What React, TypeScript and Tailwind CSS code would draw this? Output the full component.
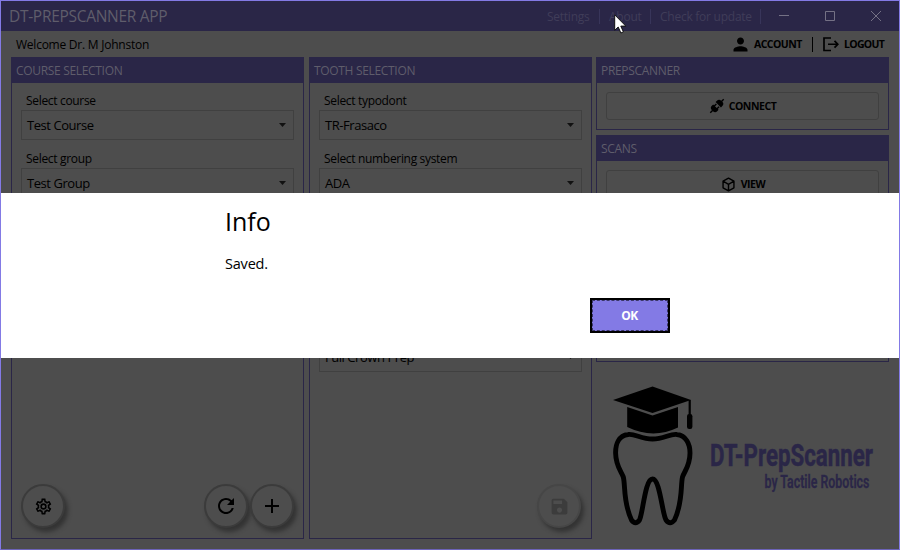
import React from "react";
import { MdPerson, MdRefresh, MdAdd, MdSave } from "react-icons/md";

function Select({ label, value }: { label?: string; value: string }) {
  return (
    <div className="h-[58px]">
      <div className="flex h-[18px] items-center pl-[5px] text-[12px] tracking-[-0.32px] whitespace-nowrap">{label}</div>
      <div className="flex h-[30px] items-center justify-between border border-[#404040] pr-[7px] pl-[5px] text-[13px] whitespace-nowrap">
        <span className="pt-[2px] tracking-[-0.45px]">{value}</span>
        <svg className="h-1 w-[7px]" viewBox="0 0 7 4">
          <path d="M0 0h7L3.500 4Z" fill="#111" />
        </svg>
      </div>
    </div>
  );
}

function Panel({ title, className, children }: { title: string; className: string; children?: React.ReactNode }) {
  return (
    <section className={`flex flex-col border border-[#2a2647] ${className}`}>
      <h2 className="-mx-px -mt-px flex h-[26px] shrink-0 items-center bg-[#2a2647] pt-[2px] pl-[5px] text-[12px] tracking-[-0.32px] text-[#5f5d6b] whitespace-nowrap">
        {title}
      </h2>
      {children}
    </section>
  );
}

function RoundButton({ children, disabled }: { children: React.ReactNode; disabled?: boolean }) {
  return (
    <button
      className={`flex size-11 items-center justify-center rounded-full border-2 bg-[#4d4d4d] shadow-[3px_4px_4px_#333333] ${
        disabled ? "border-[#464646] text-[#3c3c3c]" : "border-[#3b3b3b] text-black"
      }`}
    >
      {children}
    </button>
  );
}

function WideButton({ icon, label }: { icon: React.ReactNode; label: string }) {
  return (
    <button className="mx-[9px] mt-[9px] flex h-7 shrink-0 items-center justify-center gap-[5px] rounded-[3px] border border-[#404040] pl-px text-[10.5px] font-bold tracking-[-0.45px]">
      {icon}
      <span className="pt-[2px]">{label}</span>
    </button>
  );
}

function Plug() {
  return (
    <svg viewBox="0 0 14 14" className="size-[14px] overflow-visible">
      <g transform="rotate(-45 7 7)">
        <path d="M-2.500 7H1M13 7h3.500M4 5.100h4M4 8.900h4" fill="none" stroke="#000" strokeWidth="1.400" />
        <path d="M5.400 3.200v7.600H3.500A3 3 0 0 1 .500 7.800V6.200A3 3 0 0 1 3.500 3.200ZM8.800 3.200v7.600h1.900A3 3 0 0 0 13.700 7.800V6.200A3 3 0 0 0 10.700 3.200Z" />
      </g>
    </svg>
  );
}

function Cog() {
  return (
    <svg viewBox="0 0 24 24" className="size-[19px]" fill="currentColor">
      <path d="M12 8a4 4 0 0 1 4 4 4 4 0 0 1-4 4 4 4 0 0 1-4-4 4 4 0 0 1 4-4m0 2a2 2 0 0 0-2 2 2 2 0 0 0 2 2 2 2 0 0 0 2-2 2 2 0 0 0-2-2m-2 12c-.25 0-.46-.18-.5-.42l-.37-2.65c-.63-.25-1.17-.59-1.69-.99l-2.49 1.01c-.22.08-.49 0-.61-.22l-2-3.46a.493.493 0 0 1 .12-.64l2.11-1.66L4.500 12l.07-1-2.11-1.63a.493.493 0 0 1-.12-.64l2-3.46c.12-.22.39-.31.61-.22l2.49 1c.52-.39 1.06-.73 1.69-.98l.37-2.65c.04-.24.25-.42.5-.42h4c.25 0 .46.18.5.42l.37 2.65c.63.25 1.17.59 1.69.98l2.49-1c.22-.09.49 0 .61.22l2 3.46c.13.22.07.49-.12.64L19.43 11l.07 1-.07 1 2.11 1.63c.19.15.25.42.12.64l-2 3.46c-.12.22-.39.31-.61.22l-2.49-1c-.52.39-1.06.73-1.69.98l-.37 2.65c-.04.24-.25.42-.5.42zm1.25-18-.37 2.61c-1.2.25-2.26.89-3.03 1.78L5.44 7.35l-.75 1.3L6.8 10.2a5.55 5.55 0 0 0 0 3.6l-2.12 1.56.75 1.3 2.43-1.04c.77.88 1.82 1.52 3.01 1.76l.37 2.62h1.52l.37-2.61c1.19-.25 2.24-.89 3.01-1.77l2.43 1.04.75-1.3-2.12-1.55c.4-1.17.4-2.44 0-3.61l2.11-1.55-.75-1.3-2.41 1.04a5.42 5.42 0 0 0-3.03-1.77L12.75 4z" />
    </svg>
  );
}

function Logo() {
  return (
    <svg className="mt-[18px] ml-[10px] h-[160px] w-[285px] shrink-0" viewBox="606 380 285 160">
      <path d="M613 400 652.5 386.5 691 400 652.5 413Z" />
      <path d="M627.2 407 652.5 415.6 678 407V427.5Q653 439.5 627.2 427Z" />
      <path d="M689.7 400V418" fill="none" stroke="#000" strokeWidth="2.2" />
      <rect x="687" y="414" width="5.4" height="15" rx="2.2" />
      <path
        d="M652.5 439C641 439 635 433.5 628 434.5C619 435.5 615.5 444 615.6 453C615.8 466 621 471 623.3 477C625.5 485 623 502 631.5 520Q635.5 525.500 639.500 520C643 513 645 479 652.500 479C660 479 662 513 666 520Q670 525.500 674.500 520C683 502 680.500 485 682.500 477C684.500 471 690 466 690 453C690 444 686 435.500 677 434.500C670 433.500 664 439 652.500 439Z"
        fill="none"
        stroke="#000"
        strokeWidth="4.900"
      />
      <g fill="#2a2647" stroke="#2a2647" fontFamily="Roboto, sans-serif">
        <text transform="translate(710 465.500) scale(.7 1)" fontSize="32" fontWeight="700" strokeWidth=".5" textLength="232.800" lengthAdjust="spacingAndGlyphs">DT-PrepScanner</text>
        <text transform="translate(764.500 488) scale(.66 1)" fontSize="18" fontWeight="600" strokeWidth=".3" textLength="159" lengthAdjust="spacingAndGlyphs">by Tactile Robotics</text>
      </g>
    </svg>
  );
}

export default function App() {
  return (
    <div className="relative flex h-[550px] w-[900px] flex-col overflow-hidden border border-[#837ae5] border-b-[#6c63b8] bg-[#4d4d4d] font-['Open_Sans','Noto_Sans',sans-serif] text-black">
      <header className="flex h-[30px] shrink-0 items-center bg-[#2a2647] pl-2 text-[#5f5d6b]">
        <h1 className="flex-1 pt-[2px] text-[15.5px] tracking-[-0.3px] whitespace-nowrap">DT-PREPSCANNER APP</h1>
        <nav className="flex items-center text-[12px] tracking-[-0.25px] text-[#403d59] whitespace-nowrap">
          <span className="w-[52px] pt-[2px]">Settings</span>
          <span className="flex h-[15px] w-[51px] items-center border-l border-[#38355a] pt-[2px] pl-[9px]">About</span>
          <span className="flex h-[15px] w-[111px] items-center border-x border-[#38355a] pt-[2px] pl-[9px]">Check for update</span>
        </nav>
        <svg className="h-[30px] w-[138px]" viewBox="761 1 138 30" fill="none" stroke="#747185">
          <path d="M779 15.500h10M825.500 11.500h9v9h-9zM871 11l10 10M881 11l-10 10" />
        </svg>
      </header>
      <div className="flex h-[26px] shrink-0 items-center pr-[15px] pl-[15px] text-[12px] whitespace-nowrap">
        <span className="flex-1 pt-[2px] tracking-[-0.24px]">Welcome Dr. M Johnston</span>
        <MdPerson className="mr-[3px] size-[21px]" />
        <span className="w-12 pt-[2px] text-[10.5px] font-bold tracking-[-0.55px]">ACCOUNT</span>
        <i className="mr-[10px] ml-[10px] h-[15px] w-px bg-black" />
        <svg className="mr-[5px] h-[15px] w-4" viewBox="0 0 16 15" fill="none" stroke="#000" strokeWidth="1.700">
          <path d="M8 1H1v12.500h7M5 7.250h9.500M11.500 3.800l3.300 3.450-3.300 3.450" />
        </svg>
        <span className="w-10 pt-[2px] text-[10.5px] font-bold tracking-[-0.7px]">LOGOUT</span>
      </div>
      <main className="flex h-[482px] shrink-0 pl-[10px]">
        <Panel title="COURSE SELECTION" className="w-[293px]">
          <div className="px-[9px] pt-[9px]">
            <Select label="Select course" value="Test Course" />
            <Select label="Select group" value="Test Group" />
          </div>
          <div className="mt-auto flex gap-[1.5px] pb-[10px] pl-[9px]">
            <RoundButton><Cog /></RoundButton>
            <span className="w-[136px]" />
            <RoundButton><MdRefresh className="size-6" /></RoundButton>
            <RoundButton><MdAdd className="size-6" /></RoundButton>
          </div>
        </Panel>
        <Panel title="TOOTH SELECTION" className="ml-[5px] w-[283px]">
          <div className="px-[9px] pt-[9px]">
            <Select label="Select typodont" value="TR-Frasaco" />
            <Select label="Select numbering system" value="ADA" />
            <div className="mt-[116px]"><Select value="Full Crown Prep" /></div>
          </div>
          <div className="mt-auto flex justify-end pr-[10px] pb-[10px]">
            <RoundButton disabled><MdSave className="size-[21px]" /></RoundButton>
          </div>
        </Panel>
        <div className="ml-1 flex w-[293px] flex-col">
          <Panel title="PREPSCANNER" className="h-[73px] shrink-0">
            <WideButton icon={<Plug />} label="CONNECT" />
          </Panel>
          <Panel title="SCANS" className="mt-[5px] h-[227px] shrink-0">
            <WideButton
              label="VIEW"
              icon={
                <svg viewBox="0 0 16 16" className="size-[15px]" fill="none" stroke="#000" strokeWidth="1.500" strokeLinejoin="round">
                  <path d="M8 1.200 13.800 4.500v7L8 14.800 2.200 11.500v-7ZM2.200 4.500 8 7.800l5.800-3.300M8 7.800v6.700" />
                </svg>
              }
            />
          </Panel>
          <Logo />
        </div>
      </main>

      <div role="dialog" className="absolute top-[192px] left-0 h-[165px] w-[898px] bg-white pl-[224px]">
        <h2 className="mt-[12px] h-8 text-[25px] leading-8">Info</h2>
        <p className="mt-[17px] h-5 text-[14.5px] leading-5 tracking-[-0.2px]">Saved.</p>
        <button className="mt-[24px] ml-[365px] flex h-[35px] w-20 border-2 border-black bg-[#837ae5] text-[12px] font-bold tracking-[-0.5px] text-white">
          <span className="flex h-full w-full items-center justify-center border border-dashed border-[#3b3768] pr-px">OK</span>
        </button>
      </div>
      <svg className="absolute top-[13px] left-[613px] h-5 w-[13px]" viewBox="0 0 13 20">
        <path d="M.7.8v15.500l3.500-3.300 2.700 6 2.500-1.100-2.600-5.800h5Z" fill="#fff" stroke="#111" />
      </svg>
    </div>
  );
}
